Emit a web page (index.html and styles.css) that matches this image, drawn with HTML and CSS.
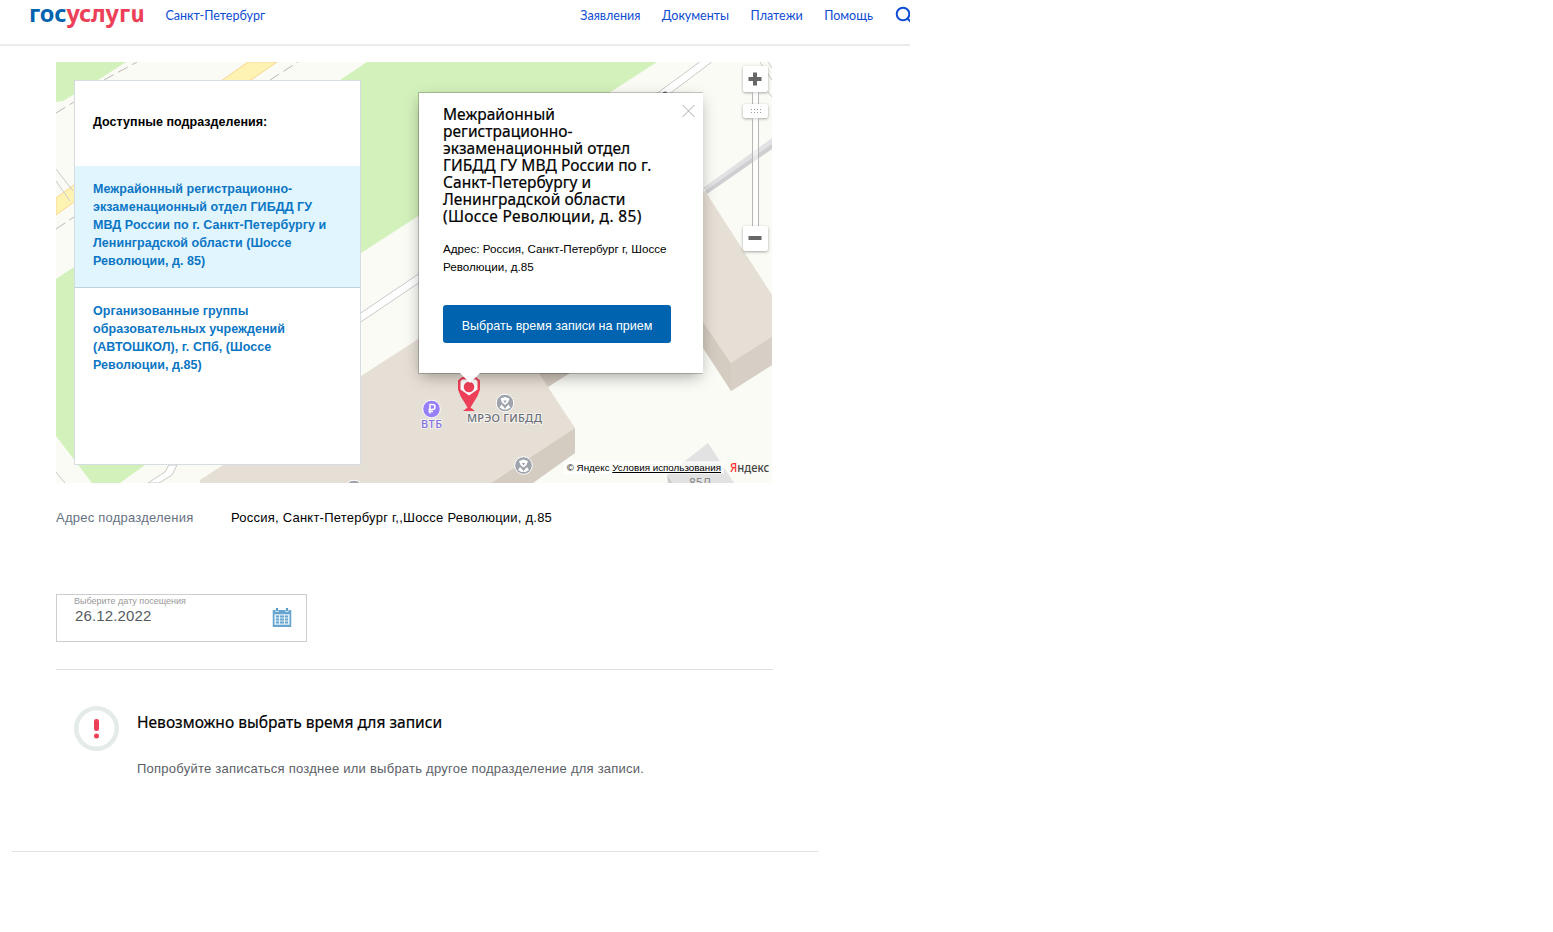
FILE: index.html
```html
<!DOCTYPE html>
<html lang="ru">
<head>
<meta charset="utf-8">
<title>Госуслуги</title>
<link rel="stylesheet" href="styles.css">
</head>
<body>
<div class="page">
  <header class="header">
    <a class="logo"><span class="logo-blue">гос</span><span class="logo-red">услуг<span class="logo-i">и</span></span></a>
    <a class="city">Санкт-Петербург</a>
    <nav class="nav">
      <a>Заявления</a><a>Документы</a><a>Платежи</a><a>Помощь</a>
      <svg class="search" width="16" height="20" viewBox="0 0 16 20"><circle cx="9" cy="9" r="6.300"/><path d="M13.500 13.500l4 4"/></svg>
    </nav>
  </header>

  <main class="main">
    <section class="map">
      <svg class="map-canvas" width="716" height="421" viewBox="56 62 716 421">
        <rect x="56" y="62" width="716" height="421" fill="#fafbf5"/>
        <g fill="#d3f1ba">
          <path d="M56 62H126L98 80 63 101 56 102z"/>
          <path d="M367 62H657L361 253 145 465 120 483H92L56 436V279L74 267 200 180 340 80z"/>
        </g>
        <path d="M248 62H277L74 202 56 215V198L74 185z" fill="#fff3b4" stroke="#f8d48f"/>
        <g fill="none" stroke="#b9bab8" stroke-dasharray="11 5">
          <path d="M56 113L74 102M104 80L137 62M270 80L298 62M56 229L74 217"/>
        </g>
        <g fill="none" stroke="#c9cac8">
          <path d="M56 169L73 191M56 181L70 201M56 472L65 483M760 62L772 80M768 62L772 68M757 78L772 97"/>
          <path d="M148 483L165 472 169 465H177L172 475 159 483z" fill="#fff"/>
          <path d="M340 327L420 273 420 267 701 61H713L420 282 340 336z" fill="#fff"/>
        </g>
        <circle cx="665" cy="94" r="2.500" fill="#777"/>
        <path d="M703 188L772 138V145L707 191z" fill="#e2e2e4"/>
        <path d="M705 191L772 144V149L707 194z" fill="#cfcfd2"/>
        <path d="M703 190L707 194 772 295V337L731 363 703 322 600 190z" fill="#e6dfd5"/>
        <path d="M703 322L731 363 772 337V365L731 391 703 348z" fill="#d4cbc1"/>
        <path d="M731 363L772 337V365L731 391z" fill="#d7cec5"/>
        <path d="M530 373H570L548 387z" fill="#d2c9bf"/>
        <path d="M200 480L361 376 440 325H507L575 428 491 483H200z" fill="#e6dfd5"/>
        <path d="M575 428V453L533 483H491z" fill="#d4cbc1"/>
        <path d="M667 475L708 443 734 483H673z" fill="#e2e2e3"/>
        <path d="M667 475L673 483H668z" fill="#ccc"/>
        <text class="house" x="689" y="487">85Л</text>
        <circle cx="431.500" cy="409" r="8.800" fill="#967ff7" stroke="#fff"/>
        <path d="M430 413.500V404.500H432.500A2.500 2.500 0 0 1 432.500 409.500H428.500M428.500 411.500H433" fill="none" stroke="#fff" stroke-width="1.500"/>
        <g id="poi">
          <circle cx="505" cy="403" r="8.800" fill="#9fa3ab" stroke="#fff"/>
          <path d="M500.500 398.500L505 397 509.500 398.500 508 402.500 505 405 502 402.500zM499.500 407.500L501.500 404.500 505 408.500 508.500 404.500 510.500 407.500 507 409.500H503z" fill="#fff"/>
          <path d="M503.200 400.500H506.800L505 403z" fill="#9fa3ab"/>
          <path d="M504 405.500H506L505 409z" fill="#9fa3ab"/>
        </g>
        <use href="#poi" x="18.500" y="62.500"/>
        <use href="#poi" x="-151" y="86"/>
        <text class="poi-text vtb" x="421" y="428" textLength="21">ВТБ</text>
        <text class="poi-text" x="467" y="422" textLength="75">МРЭО ГИБДД</text>
        <path d="M462 377H476L480 380.500V389.500L477.500 396 470.500 407.500 475 411H463L467.500 407.500 460.500 396 458 389.500V380.500z" fill="#ee3f58"/>
        <path d="M462 379.500H476L477.500 381.500V389.500L469 395.500 460.500 389.500V381.500z" fill="#fff"/>
        <circle cx="469" cy="387" r="5.300" fill="#ee3f58"/>
      </svg>

      <aside class="list">
        <h3 class="list-title">Доступные подразделения:</h3>
        <a class="item active">Межрайонный регистрационно-<br>экзаменационный отдел ГИБДД ГУ<br>МВД России по г. Санкт-Петербургу и<br>Ленинградской области (Шоссе<br>Революции, д. 85)</a>
        <a class="item">Организованные группы<br>образовательных учреждений<br>(АВТОШКОЛ), г. СПб, (Шоссе<br>Революции, д.85)</a>
      </aside>

      <div class="balloon">
        <svg class="close" width="13" height="14" viewBox="0 0 13 14"><path d="M.5 1L12.500 13M12.500 1L.5 13"/></svg>
        <h2 class="balloon-title">Межрайонный<br>регистрационно-<br>экзаменационный отдел<br>ГИБДД ГУ МВД России по г.<br>Санкт-Петербургу и<br>Ленинградской области<br><span class="wide">(Шоссе Революции, д. 85)</span></h2>
        <p class="balloon-address">Адрес: Россия, Санкт-Петербург г, Шоссе<br>Революции, д.85</p>
        <button class="button">Выбрать время записи на прием</button>
        <svg class="tail" width="20" height="11" viewBox="0 0 20 11"><path d="M0 0H20L10 10z" fill="#fff"/></svg>
      </div>

      <div class="zoom">
        <div class="zoom-btn"><svg width="14" height="14" viewBox="0 0 14 14"><path d="M7 .5V13.500M.5 7H13.500"/></svg></div>
        <div class="track"></div>
        <div class="thumb"><svg width="10" height="4" viewBox="0 0 10 4"><path d="M0 .5H10M0 3.500H10"/></svg></div>
        <div class="track long"></div>
        <div class="zoom-btn minus"><svg width="14" height="14" viewBox="0 0 14 14"><path d="M.5 7H13.500"/></svg></div>
      </div>

      <div class="copyright">
        <span class="terms">© Яндекс <u>Условия использования</u></span>
        <svg class="yandex" width="42" height="18" viewBox="0 0 42 18"><text x="1" y="13.500" textLength="39" lengthAdjust="spacingAndGlyphs"><tspan fill="#f33">Я</tspan>ндекс</text></svg>
      </div>
    </section>

    <div class="address"><span class="label">Адрес подразделения</span><span class="value">Россия, Санкт-Петербург г,,Шоссе Революции, д.85</span></div>

    <div class="date">
      <div><div class="date-label">Выберите дату посещения</div><div class="date-value">26.12.2022</div></div>
      <svg class="calendar" width="20" height="19" viewBox="0 0 20 19">
        <path d="M.5 2H19.500V19H.5z" fill="#a9cee6"/>
        <path d="M1.500 2H18.500V6H1.500zM1 17H19V19H1zM1 2H2V19H1zM18 2H19V19H18z" fill="#66a5cf"/>
        <path d="M3.500 0H6.500V4H3.500zM13.500 0H16.500V4H13.500z" fill="#d6e9f5"/>
        <path d="M4 0H6V3H4zM14 0H16V3H14z" fill="#5a9cc9"/>
        <path d="M3 6.500H17V16.500H3z" fill="#e4f1f9"/>
        <path d="M4 7.500H7V9.500H4zM8 7.500H12V9.500H8zM13 7.500H16V9.500H13zM4 10.500H7V12.500H4zM8 10.500H12V12.500H8zM13 10.500H16V12.500H13zM4 13.500H7V15.500H4zM8 13.500H12V15.500H8zM13 13.500H16V15.500H13z" fill="#66a5cf"/>
      </svg>
    </div>

    <section class="notice">
      <svg class="alert" width="45" height="45" viewBox="0 0 45 45"><circle cx="22.500" cy="22.500" r="20.250"/><rect x="20" y="13" width="5" height="12" rx="2.200"/><rect x="20" y="27.500" width="5" height="5" rx="2.500"/></svg>
      <div>
        <h2 class="notice-title">Невозможно выбрать время для записи</h2>
        <p class="notice-text">Попробуйте записаться позднее или выбрать другое подразделение для записи.</p>
      </div>
    </section>
  </main>
  <div class="footer-line"></div>
</div>
</body>
</html>
```
FILE: styles.css
```css
* { box-sizing: border-box; }
body { margin: 0; background: #fff; font-family: "Liberation Sans", Arial, sans-serif; color: #000; }
h2, h3, p { margin: 0; }
.page { width: 910px; height: 932px; overflow: hidden; white-space: nowrap; }

.header { display: flex; height: 46px; padding-left: 29px; border-bottom: 2px solid #ebebec; font: 12.500px/31px Lato, sans-serif; color: #0d4cd3; }
.logo { width: 136.500px; font: 700 23.500px/26px "Noto Sans", sans-serif; letter-spacing: -.15px; }
.logo-blue { color: #0063b0; }
.logo-red { color: #ee3f58; }
.logo-i { display: inline-block; font-style: italic; transform: skewX(12deg); }
.city { flex: 1; }
.nav { display: flex; gap: 21.500px; }
.search { margin: 5px 0 0 -.5px; fill: none; stroke: #0d4cd3; stroke-width: 2; }

.main { width: 717px; margin: 16px 0 0 56px; }
.map { position: relative; width: 716px; height: 421px; overflow: hidden; }
.map-canvas { display: block; }
.poi-text { font: 500 11px "Noto Sans", sans-serif; fill: #6a6f7a; stroke: #fff; stroke-width: 2px; stroke-opacity: .6; paint-order: stroke; }
.vtb { fill: #8370e6; }
.house { font: 12px "Noto Sans", sans-serif; fill: #888; }

.list { position: absolute; left: 18px; top: 18px; width: 287px; height: 385px; background: #fff; border: 1px solid #d6dde2; }
.list-title { height: 85px; padding: 31px 18px 0; font-size: 12.500px; line-height: 20px; letter-spacing: .04px; }
.item { display: block; padding: 14px 18px; font-size: 12.500px; line-height: 18px; letter-spacing: .05px; font-weight: 700; color: #0b76c4; }
.active { height: 122px; background: #e1f5ff; border-bottom: 1px solid #bfd0da; }

.balloon { position: absolute; left: 362px; top: 30px; width: 285px; height: 282px; padding: 13px 24px; background: #fff; border: 1px solid rgba(0,0,0,.2); border-right: 0; background-clip: padding-box; box-shadow: 0 5px 15px -3px rgba(0,0,0,.35); }
.close { position: absolute; right: 8px; top: 11px; fill: none; stroke: #aaa; }
.balloon-title { font: 400 15.500px/17px "Noto Sans", sans-serif; letter-spacing: .05px; -webkit-text-stroke: .2px #000; }
.wide { letter-spacing: .28px; }
.balloon-address { margin-top: 15px; font-size: 11.650px; line-height: 18px; }
.button { display: block; width: 228px; height: 38px; margin-top: 29px; padding: 4px 0 0; border: 0; border-radius: 3px; background: #0063b0; color: #fff; font: 12.550px "Liberation Sans", sans-serif; }
.tail { position: absolute; left: 41px; top: 280px; }

.zoom { position: absolute; left: 687px; top: 4px; width: 25px; display: flex; flex-direction: column; align-items: center; }
.zoom-btn { display: flex; align-items: center; justify-content: center; width: 25px; height: 26px; padding: 0 1px 1px 0; background: #fff; border-radius: 2px; box-shadow: 0 1px 3px rgba(0,0,0,.35); fill: none; stroke: #666; stroke-width: 4; }
.minus { height: 25px; }
.track { width: 7px; height: 12px; border: solid #b7b7b7; border-width: 0 1px; background: rgba(255,255,255,.5); }
.long { height: 108px; }
.thumb { display: flex; align-items: center; justify-content: center; width: 25px; height: 14px; background: #fff; border-radius: 2px; box-shadow: 0 1px 3px rgba(0,0,0,.35); stroke: #999; stroke-dasharray: 1 2; }
.copyright { position: absolute; right: 0; bottom: 7px; display: flex; align-items: center; height: 18px; font-size: 9.800px; }
.terms { padding: 1px 3px; background: rgba(255,255,255,.7); }
.yandex { margin: 0 1px 0 5px; font: 500 12.500px "Noto Sans", sans-serif; fill: #444; overflow: visible; }

.address { display: flex; margin-top: 26px; font-size: 13px; line-height: 18px; letter-spacing: .23px; }
.label { width: 175px; color: #66727f; }

.date { display: flex; justify-content: space-between; width: 251px; height: 48px; margin-top: 67px; padding: 0 14px 0 18px; border: 1px solid #cbcdd1; }
.date-label { font-size: 9px; line-height: 12px; color: #999; margin-left: -1px; }
.date-value { font-size: 15px; line-height: 18px; letter-spacing: .15px; color: #555b60; }
.calendar { margin-top: 13px; }

.notice { display: flex; gap: 18px; margin-top: 27px; padding: 36px 0 0 18px; border-top: 1px solid #d9e1e5; height: 182px; }
.alert circle { fill: none; stroke: #e5ebea; stroke-width: 4.500; }
.alert rect { fill: #ee3f58; }
.notice-title { margin-top: 6px; font: 400 15.550px/21px "Noto Sans", sans-serif; -webkit-text-stroke: .2px #000; }
.notice-text { margin-top: 27px; font-size: 13px; line-height: 18px; letter-spacing: .24px; color: #5b6067; }
.footer-line { width: 806px; margin-left: 12px; border-top: 1px solid #dde3e6; }
```
